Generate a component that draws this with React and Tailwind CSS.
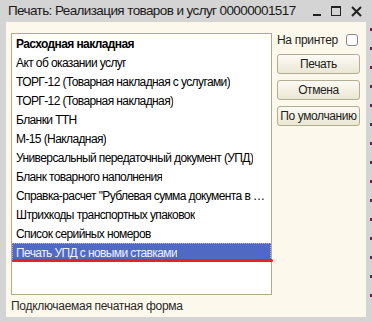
import React, { useState } from 'react';

const forms = [
  'Расходная накладная',
  'Акт об оказании услуг',
  'ТОРГ-12 (Товарная накладная с услугами)',
  'ТОРГ-12 (Товарная накладная)',
  'Бланки ТТН',
  'М-15 (Накладная)',
  'Универсальный передаточный документ (УПД)',
  'Бланк товарного наполнения',
  'Справка-расчет "Рублевая сумма документа в валюте"',
  'Штрихкоды транспортных упаковок',
  'Список серийных номеров',
  'Печать УПД с новыми ставками',
];

const font = { fontFamily: '"Liberation Sans", Arial, sans-serif' };

function WinButton({ children }) {
  return (
    <button className="h-[20px] w-[83px] whitespace-nowrap rounded-[3px] border border-[#b3ad93] bg-gradient-to-b from-[#fcfbf4] to-[#ebe7d4] text-[12px] leading-none tracking-[-0.4px] text-[#1e1e1e]">
      {children}
    </button>
  );
}

export default function App() {
  const [selected, setSelected] = useState(11);
  const [toPrinter, setToPrinter] = useState(false);

  return (
    <div className="relative flex h-[322px] w-[372px] flex-col overflow-hidden bg-[#d4d4d4]" style={font}>
      {/* Title bar */}
      <div className="flex h-[22px] shrink-0 items-center pl-[8px] pr-[10px] text-[13.5px] text-[#1a1a1a]">
        <span className="flex-1 whitespace-nowrap tracking-[-0.6px]">Печать: Реализация товаров и услуг 00000001517</span>
        <div className="flex items-center gap-[10px]">
          <span className="mt-[8px] block h-[2px] w-[8px] bg-[#222]" />
          <span className="block h-[10px] w-[10px] border-[1.5px] border-t-[2px] border-[#222]" />
          <svg width="11" height="11" viewBox="0 0 11 11">
            <path d="M1 1L10 10M10 1L1 10" stroke="#222" strokeWidth="2" />
          </svg>
        </div>
      </div>

      <div className="flex flex-1">
        <div className="w-[6px] shrink-0" />
        {/* Client area */}
        <div className="flex w-[360px] flex-col bg-[#fdf8ec] pl-[5px] pr-[7px] pt-[11px]">
          <div className="flex gap-[5px]">
            {/* List */}
            <div className="relative h-[262px] w-[261px] shrink-0 border border-[#b2ab86] bg-white">
              {forms.map((f, i) => (
                <div
                  key={f}
                  onClick={() => setSelected(i)}
                  className={`flex h-[19px] items-center overflow-hidden whitespace-nowrap px-[4px] text-[12px] tracking-[-0.6px] ${
                    i === selected
                      ? 'bg-[#506ac4] text-[#eef1fb] outline-1 -outline-offset-1 outline-dotted outline-[#c9b97a]'
                      : 'text-black'
                  } ${i === 0 ? 'font-bold tracking-[-0.3px]' : ''}`}
                >
                  <span className="truncate">{f}</span>
                </div>
              ))}
              {/* red annotation */}
              <div className="absolute left-[0px] top-[225px] h-[3px] w-[261px] rounded-full bg-[#e8202a]" />
            </div>

            {/* Right column */}
            <div className="flex w-[83px] flex-col gap-[7px]">
              <div className="flex h-[13px] items-center justify-between text-[12px] tracking-[-0.3px] text-[#1e1e1e]">
                <span>На принтер</span>
                <button
                  onClick={() => setToPrinter(!toPrinter)}
                  className="mr-[2px] h-[12px] w-[12px] rounded-[3px] border border-[#8a8a8a] bg-white"
                />
              </div>
              <div className="flex flex-col gap-[6px] pt-[1px]">
                <WinButton>Печать</WinButton>
                <WinButton>Отмена</WinButton>
                <WinButton>По умолчанию</WinButton>
              </div>
            </div>
          </div>
          <div className="pt-[2px] text-[12px] tracking-[-0.3px] text-[#2a2a2a]">Подключаемая печатная форма</div>
        </div>
        {/* edge of background window */}
        <div className="flex w-[6px] shrink-0 flex-col items-end gap-[16px] pt-[6px]">
          {Array.from({ length: 15 }).map((_, i) => (
            <span key={i} className="block h-[3px] w-[2px] bg-[#5a2a4a]" />
          ))}
        </div>
      </div>
      <div className="h-[5px] shrink-0" />
    </div>
  );
}
